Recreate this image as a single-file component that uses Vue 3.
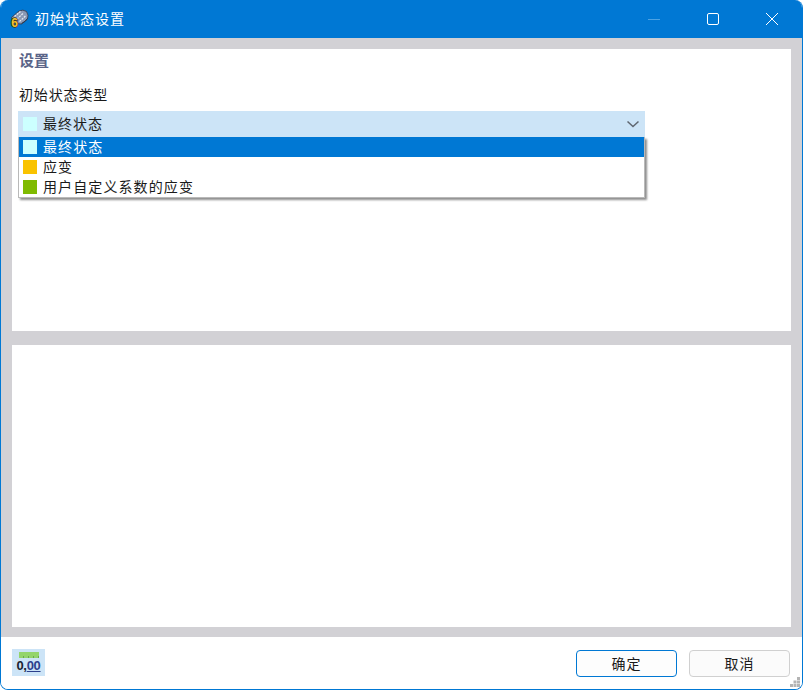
<template>
  <div class="window">
    <header class="titlebar">
      <svg class="app-icon" width="20" height="20" viewBox="0 0 20 20">
        <path d="M2.500 8.500 L10 2 Q14 0 17.500 2.500 Q20 6 18.500 10 L12.500 15 Q6 15.500 2.500 8.500 Z" fill="#8b99b4" stroke="#2e3648" stroke-width="0.800" />
        <path d="M5.500 7.500 L11.500 2.500 M8 10 L14.500 4 M10.500 12.500 L17 6.500" stroke="#e4e9f2" stroke-width="1.300" fill="none" stroke-dasharray="2 1" />
        <path d="M12.500 14.500 Q16.500 13 18.500 9.500" stroke="#2e3648" stroke-width="1" fill="none" />
        <text x="5.500" y="18" class="icon-digit">6</text>
      </svg>
      <span class="title">初始状态设置</span>
      <div class="win-buttons">
        <svg class="win-btn" width="16" height="16" viewBox="0 0 16 16">
          <path d="M2 8.500H14" stroke="#4da3e4" stroke-width="1" />
        </svg>
        <svg class="win-btn" width="16" height="16" viewBox="0 0 16 16">
          <rect x="2.500" y="2.500" width="11" height="11" rx="1.500" fill="none" stroke="#fff" stroke-width="1" />
        </svg>
        <svg class="win-btn" width="16" height="16" viewBox="0 0 16 16">
          <path d="M2 2L14 14M14 2L2 14" stroke="#fff" stroke-width="1" />
        </svg>
      </div>
    </header>

    <main class="body">
      <section class="panel">
        <div class="group-title">设置</div>
        <div class="field-label">初始状态类型</div>
        <div class="combo">
          <div class="combo-box">
            <span class="swatch" :style="{ background: options[0].color }"></span>
            <span class="item-text">{{ options[0].label }}</span>
            <svg class="chevron" width="14" height="8" viewBox="0 0 14 8">
              <path d="M1.500 1.500L7 6.500L12.500 1.500" fill="none" stroke="#5f6670" stroke-width="1.500" />
            </svg>
          </div>
          <ul class="combo-list">
            <li
              v-for="(opt, i) in options"
              :key="opt.label"
              class="combo-item"
              :class="{ selected: i === 0 }"
            >
              <span class="swatch" :style="{ background: opt.color }"></span>
              <span class="item-text">{{ opt.label }}</span>
            </li>
          </ul>
        </div>
      </section>
      <section class="panel"></section>
    </main>

    <footer class="footer">
      <button class="units-btn" type="button">
        <span class="ruler"></span>
        <span class="units-text">0,<u>00</u></span>
      </button>
      <div class="actions">
        <button class="btn primary" type="button">确定</button>
        <button class="btn" type="button">取消</button>
      </div>
      <svg class="grip" width="11" height="11" viewBox="0 0 11 11">
        <path d="M7 0h3v3H7zM3.500 3.500h3v3h-3zM7 3.500h3v3H7zM0 7h3v3H0zM3.500 7h3v3h-3zM7 7h3v3H7z" fill="#b4b4b4" />
      </svg>
    </footer>
  </div>
</template>

<script setup>
const options = [
  { label: "最终状态", color: "#ccffff" },
  { label: "应变", color: "#f9c300" },
  { label: "用户自定义系数的应变", color: "#7fba00" },
];
</script>

<style>
html,
body {
  margin: 0;
  background: #fff;
}
</style>

<style scoped>
.window {
  box-sizing: border-box;
  width: 803px;
  height: 690px;
  display: flex;
  flex-direction: column;
  background: #fff;
  border: 1px solid #0078d4;
  border-top: 0;
  border-radius: 8px;
  overflow: hidden;
  font-family: "Noto Sans CJK SC", "Noto Sans", sans-serif;
  font-size: 14px;
  color: #1a1a1a;
}

.titlebar {
  flex: none;
  height: 38px;
  display: flex;
  align-items: center;
  padding-left: 8px;
  background: #0078d4;
  color: #fff;
}

.app-icon {
  flex: none;
  overflow: visible;
}

.icon-digit {
  font-family: "Liberation Sans", sans-serif;
  font-size: 12px;
  font-weight: 700;
  fill: #f2c22e;
  stroke: #3a3320;
  stroke-width: 1.5px;
  paint-order: stroke;
  text-anchor: middle;
}

.title {
  margin: -2px 0 0 6px;
  letter-spacing: 1px;
}

.win-buttons {
  margin-left: auto;
  display: flex;
  gap: 43px;
  padding-right: 22px;
}

.win-btn {
  display: block;
}

.body {
  flex: 1;
  min-height: 0;
  display: flex;
  flex-direction: column;
  gap: 14px;
  padding: 11px 11px 10px;
  background: #d2d1d5;
}

.panel {
  flex: 1;
  min-height: 0;
  background: #fff;
  padding: 0 7px;
}

.group-title {
  margin-top: 1px;
  height: 20px;
  line-height: 20px;
  font-size: 15px;
  font-weight: 700;
  color: #5a6488;
}

.field-label {
  margin-top: 14px;
  height: 20px;
  line-height: 20px;
  letter-spacing: 0.85px;
}

.combo {
  position: relative;
  margin: 7px 0 0 -1px;
  width: 627px;
}

.combo-box {
  height: 26px;
  display: flex;
  align-items: center;
  padding-left: 5px;
  background: #cce4f7;
  letter-spacing: 1px;
}

.item-text {
  margin-top: -2px;
}

.chevron {
  margin-left: auto;
  margin-right: 5px;
}

.swatch {
  flex: none;
  width: 14px;
  height: 14px;
  margin-right: 6px;
}

.combo-list {
  position: absolute;
  top: 26px;
  left: 0;
  box-sizing: border-box;
  width: 627px;
  height: 61px;
  margin: 0;
  padding: 0;
  list-style: none;
  background: #fff;
  border: 1px solid #b9b9b9;
  border-top: 0;
  box-shadow: 2px 2px 2px #8f8f8f;
  letter-spacing: 1.1px;
}

.combo-item {
  height: 20px;
  display: flex;
  align-items: center;
  padding-left: 4px;
}

.combo-item.selected {
  background: #0078d4;
  color: #fff;
}

.footer {
  position: relative;
  flex: none;
  height: 52px;
  display: flex;
  align-items: center;
  padding: 0 12px 0 11px;
  background: #fff;
}

.units-btn {
  box-sizing: border-box;
  width: 33px;
  height: 27px;
  margin: -1px 0 0;
  padding: 3px 0 0;
  display: flex;
  flex-direction: column;
  align-items: center;
  border: 0;
  background: #cce4f7;
}

.ruler {
  box-sizing: border-box;
  width: 20px;
  height: 6px;
  background:
    repeating-linear-gradient(90deg, transparent 0 4px, #6aa84f 4px 5px) bottom / 100% 2px no-repeat,
    #94d56c;
}

.units-text {
  font-family: "Liberation Sans", sans-serif;
  font-size: 13px;
  line-height: 15px;
  font-weight: 700;
  letter-spacing: -0.3px;
  color: #1a2230;
}

.units-text u {
  color: #2b3f8c;
}

.actions {
  margin-left: auto;
  display: flex;
  gap: 12px;
}

.btn {
  box-sizing: border-box;
  width: 101px;
  height: 27px;
  padding: 0;
  border: 1px solid #d0d0d0;
  border-radius: 4px;
  background: #fbfbfb;
  font: inherit;
  color: #1a1a1a;
  letter-spacing: 1px;
}

.btn.primary {
  border-color: #0078d4;
  background: #fdfdfd;
}

.grip {
  position: absolute;
  right: 1px;
  bottom: 1px;
}
</style>
